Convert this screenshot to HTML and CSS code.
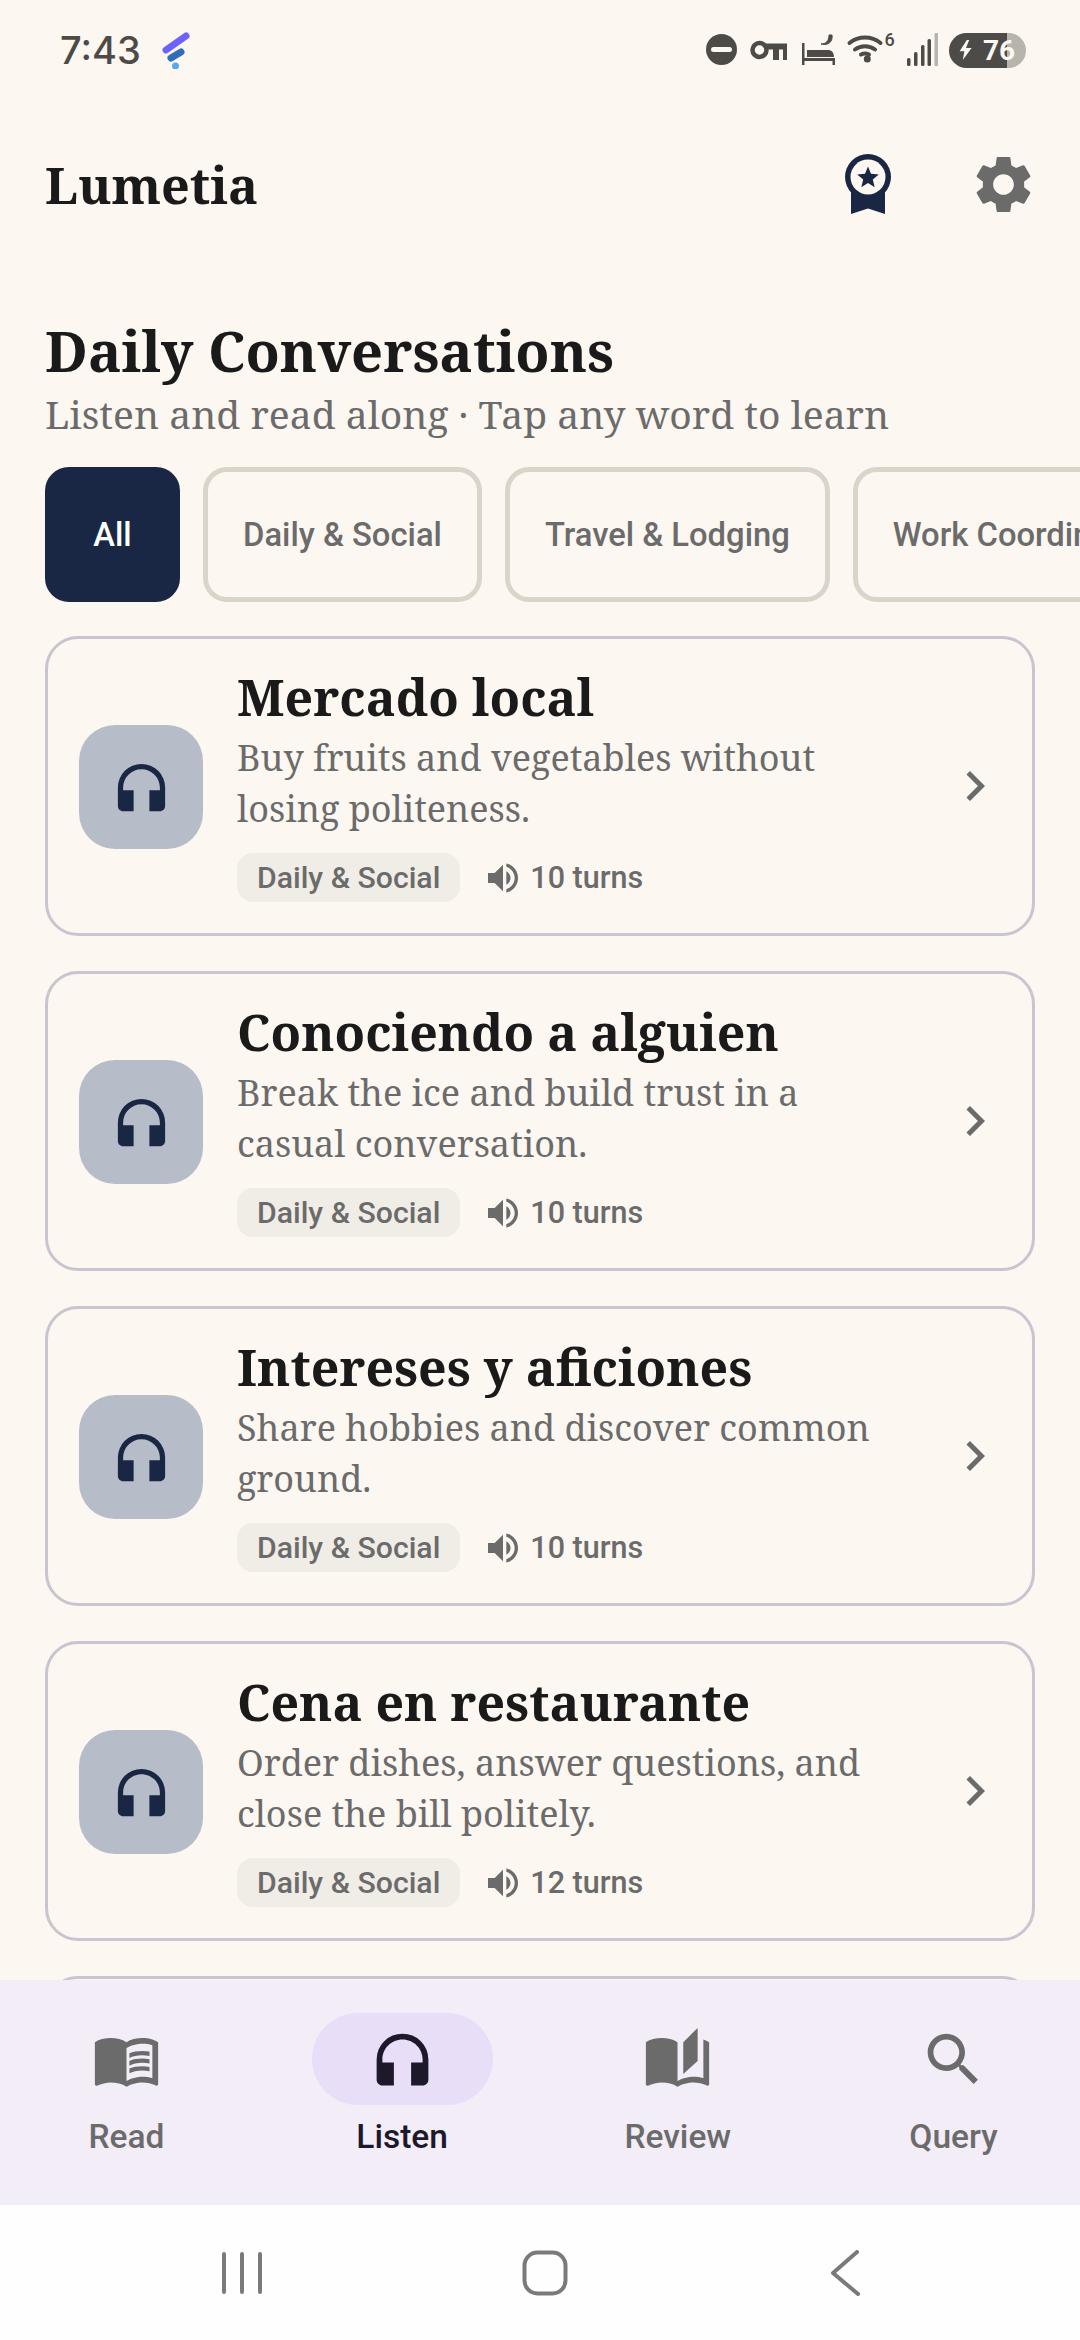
FILE: index.html
```html
<!DOCTYPE html>
<html lang="en">
<head>
<meta charset="utf-8">
<title>Lumetia</title>
<link rel="stylesheet" href="styles.css">
</head>
<body>
<div class="app">
  <div class="status">
    <span class="time">7:43</span>
    <svg class="logo" width="28" height="37" viewBox="161 32 28 37"><path d="M165 50 L185 36" stroke="#6C63FF" stroke-width="7" stroke-linecap="round"/><path d="M170 58 L180 52" stroke="#2F6DB8" stroke-width="7" stroke-linecap="round"/><circle cx="174.500" cy="66" r="3.500" fill="#5AA9E6"/></svg>
    <span class="spacer"></span>
    <svg class="sysicons" width="232" height="40" viewBox="706 30 232 40">
      <circle cx="721.500" cy="49.500" r="15.500" fill="#4D4B48"/><rect x="711" y="47" width="21" height="5" rx="2.500" fill="#FCF7F1"/>
      <circle cx="759.500" cy="50" r="7" fill="none" stroke="#4D4B48" stroke-width="4.500"/><path d="M766 43.500h21v6h-21zM773 48h6v12h-6zM783 48h4v12h-4z" fill="#4D4B48"/>
      <path d="M802 43h2.500v22H802zM807 50h21c3.500 0 6 2.500 6 7H807zM802 58h33v7h-2.500v-4H802z" fill="#4D4B48"/><path d="M832 35c1 6-3 11-11 9 5 0 8-3 8-9z" fill="#4D4B48" stroke="#4D4B48"/>
      <path d="M849.500 44a25 25 0 0 1 31 0M855 50.500a17 17 0 0 1 20 0M861 55.500a9 9 0 0 1 8 0" transform="translate(0 -1)" fill="none" stroke="#4D4B48" stroke-width="4" stroke-linecap="round"/><circle cx="867.300" cy="59" r="3.500" fill="#4D4B48"/>
      <text class="wifi6" x="884.500" y="46">6</text>
      <rect x="907" y="58" width="3.500" height="8" rx="1.500" fill="#4D4B48"/><rect x="914" y="52" width="3.500" height="14" rx="1.500" fill="#4D4B48"/><rect x="921" y="45" width="3.500" height="21" rx="1.500" fill="#4D4B48"/><rect x="927.500" y="39" width="3.500" height="27" rx="1.500" fill="#4D4B48"/><rect x="934.500" y="33" width="3.500" height="33" rx="1" fill="#B7B4AD"/>
    </svg>
    <div class="battery">
      <svg width="16" height="20" viewBox="0 0 18 25"><path d="M10 0 1 14h6l-2 11 11-15h-7l4-10z" fill="#FCF7F1"/></svg>
      <span>76</span>
    </div>
  </div>

  <header class="topbar">
    <h1 class="brand">Lumetia</h1>
    <svg class="badge" width="46" height="60" viewBox="0 0 46 60"><path d="M6 30h34v30l-17-5.500L6 60z" fill="#1A2744"/><circle cx="23" cy="23" r="23" fill="#1A2744"/><circle cx="23" cy="23" r="17.500" fill="#FCF7F1"/><path d="M23 12.500l3 7.300 7.800.6-6 5.100 1.900 7.700L23 29l-6.700 4.200 1.900-7.700-6-5.100 7.800-.6z" fill="#1A2744"/></svg>
    <svg class="gear" width="69" height="69" viewBox="0 0 24 24"><path d="M19.140 12.940c.04-.3.06-.61.06-.94 0-.32-.02-.64-.07-.94l2.030-1.580c.18-.14.23-.41.12-.61l-1.920-3.320c-.12-.22-.37-.29-.59-.22l-2.390.96c-.5-.38-1.030-.7-1.620-.94l-.36-2.540c-.04-.24-.24-.41-.48-.41h-3.840c-.24 0-.43.17-.47.41l-.36 2.540c-.59.24-1.130.57-1.620.94l-2.390-.96c-.22-.08-.47 0-.59.22L2.740 8.870c-.12.21-.08.47.12.61l2.030 1.580c-.05.3-.09.63-.09.94s.02.64.07.94l-2.030 1.580c-.18.14-.23.41-.12.61l1.920 3.320c.12.22.37.29.59.22l2.390-.96c.5.38 1.030.7 1.620.94l.36 2.540c.05.24.24.41.48.41h3.840c.24 0 .44-.17.47-.41l.36-2.540c.59-.24 1.130-.56 1.620-.94l2.390.96c.22.08.47 0 .59-.22l1.920-3.320c.12-.22.07-.47-.12-.61l-2.010-1.580zM12 15.600c-1.980 0-3.600-1.620-3.600-3.600s1.620-3.600 3.600-3.600 3.600 1.620 3.600 3.600-1.620 3.600-3.600 3.600z" fill="#6B6B6B"/></svg>
  </header>

  <main class="content">
    <h2 class="heading">Daily Conversations</h2>
    <p class="subheading">Listen and read along · Tap any word to learn</p>
    <div class="chips">
      <span class="chip chip-active">All</span>
      <span class="chip">Daily &amp; Social</span>
      <span class="chip">Travel &amp; Lodging</span>
      <span class="chip">Work Coordination</span>
    </div>
    <div class="cards">
      <article class="card">
        <div class="thumb"><svg width="63" height="63" viewBox="0 0 24 24"><path d="M12 3a9 9 0 0 0-9 9v7c0 1.100.9 2 2 2h4v-8H5v-1c0-3.870 3.130-7 7-7s7 3.130 7 7v1h-4v8h4c1.100 0 2-.9 2-2v-7a9 9 0 0 0-9-9z" fill="#1A2744"/></svg></div>
        <div class="body">
          <h3 class="title">Mercado local</h3>
          <p class="desc">Buy fruits and vegetables without losing politeness.</p>
          <div class="meta"><span class="tag">Daily &amp; Social</span><svg class="vol" width="40" height="40" viewBox="0 0 24 24"><path d="M3 9v6h4l5 5V4L7 9H3zm13.500 3c0-1.770-1.020-3.290-2.500-4.030v8.050c1.480-.73 2.500-2.250 2.500-4.020zM14 3.230v2.060c2.890.86 5 3.540 5 6.710s-2.110 5.850-5 6.710v2.060c4.010-.91 7-4.490 7-8.770s-2.990-7.860-7-8.770z" fill="#6B6B6B"/></svg><span class="turns">10 turns</span></div>
        </div>
        <svg class="chev" width="60" height="60" viewBox="0 0 24 24"><path d="M10 6 8.590 7.410 13.170 12l-4.580 4.590L10 18l6-6z" fill="#6B6B6B"/></svg>
      </article>
      <article class="card">
        <div class="thumb"><svg width="63" height="63" viewBox="0 0 24 24"><path d="M12 3a9 9 0 0 0-9 9v7c0 1.100.9 2 2 2h4v-8H5v-1c0-3.870 3.130-7 7-7s7 3.130 7 7v1h-4v8h4c1.100 0 2-.9 2-2v-7a9 9 0 0 0-9-9z" fill="#1A2744"/></svg></div>
        <div class="body">
          <h3 class="title">Conociendo a alguien</h3>
          <p class="desc">Break the ice and build trust in a casual conversation.</p>
          <div class="meta"><span class="tag">Daily &amp; Social</span><svg class="vol" width="40" height="40" viewBox="0 0 24 24"><path d="M3 9v6h4l5 5V4L7 9H3zm13.500 3c0-1.770-1.020-3.290-2.500-4.030v8.050c1.480-.73 2.500-2.250 2.500-4.020zM14 3.230v2.060c2.890.86 5 3.540 5 6.710s-2.110 5.850-5 6.710v2.060c4.010-.91 7-4.490 7-8.770s-2.990-7.860-7-8.770z" fill="#6B6B6B"/></svg><span class="turns">10 turns</span></div>
        </div>
        <svg class="chev" width="60" height="60" viewBox="0 0 24 24"><path d="M10 6 8.590 7.410 13.170 12l-4.580 4.590L10 18l6-6z" fill="#6B6B6B"/></svg>
      </article>
      <article class="card">
        <div class="thumb"><svg width="63" height="63" viewBox="0 0 24 24"><path d="M12 3a9 9 0 0 0-9 9v7c0 1.100.9 2 2 2h4v-8H5v-1c0-3.870 3.130-7 7-7s7 3.130 7 7v1h-4v8h4c1.100 0 2-.9 2-2v-7a9 9 0 0 0-9-9z" fill="#1A2744"/></svg></div>
        <div class="body">
          <h3 class="title">Intereses y aficiones</h3>
          <p class="desc">Share hobbies and discover common ground.</p>
          <div class="meta"><span class="tag">Daily &amp; Social</span><svg class="vol" width="40" height="40" viewBox="0 0 24 24"><path d="M3 9v6h4l5 5V4L7 9H3zm13.500 3c0-1.770-1.020-3.290-2.500-4.030v8.050c1.480-.73 2.500-2.250 2.500-4.020zM14 3.230v2.060c2.890.86 5 3.540 5 6.710s-2.110 5.850-5 6.710v2.060c4.010-.91 7-4.490 7-8.770s-2.990-7.860-7-8.770z" fill="#6B6B6B"/></svg><span class="turns">10 turns</span></div>
        </div>
        <svg class="chev" width="60" height="60" viewBox="0 0 24 24"><path d="M10 6 8.590 7.410 13.170 12l-4.580 4.590L10 18l6-6z" fill="#6B6B6B"/></svg>
      </article>
      <article class="card">
        <div class="thumb"><svg width="63" height="63" viewBox="0 0 24 24"><path d="M12 3a9 9 0 0 0-9 9v7c0 1.100.9 2 2 2h4v-8H5v-1c0-3.870 3.130-7 7-7s7 3.130 7 7v1h-4v8h4c1.100 0 2-.9 2-2v-7a9 9 0 0 0-9-9z" fill="#1A2744"/></svg></div>
        <div class="body">
          <h3 class="title">Cena en restaurante</h3>
          <p class="desc">Order dishes, answer questions, and close the bill politely.</p>
          <div class="meta"><span class="tag">Daily &amp; Social</span><svg class="vol" width="40" height="40" viewBox="0 0 24 24"><path d="M3 9v6h4l5 5V4L7 9H3zm13.500 3c0-1.770-1.020-3.290-2.500-4.030v8.050c1.480-.73 2.500-2.250 2.500-4.020zM14 3.230v2.060c2.890.86 5 3.540 5 6.710s-2.110 5.850-5 6.710v2.060c4.010-.91 7-4.490 7-8.770s-2.990-7.860-7-8.770z" fill="#6B6B6B"/></svg><span class="turns">12 turns</span></div>
        </div>
        <svg class="chev" width="60" height="60" viewBox="0 0 24 24"><path d="M10 6 8.590 7.410 13.170 12l-4.580 4.590L10 18l6-6z" fill="#6B6B6B"/></svg>
      </article>
      <article class="card"></article>
    </div>
  </main>

  <nav class="tabs">
    <div class="tab">
      <div class="tab-icon"><svg width="69" height="69" viewBox="0 0 24 24"><path d="M21 5c-1.110-.35-2.330-.5-3.500-.5-1.950 0-4.050.4-5.500 1.500-1.450-1.100-3.550-1.500-5.500-1.500S2.450 4.900 1 6v14.650c0 .25.25.5.5.5.1 0 .15-.05.25-.05C3.100 20.450 5.050 20 6.500 20c1.950 0 4.050.4 5.500 1.500 1.350-.85 3.800-1.500 5.500-1.500 1.650 0 3.350.3 4.750 1.050.1.05.15.05.25.05.25 0 .5-.25.5-.5V6c-.6-.45-1.250-.75-2-1zm0 13.500c-1.100-.35-2.300-.5-3.500-.5-1.700 0-4.150.65-5.500 1.500V8c1.350-.85 3.800-1.500 5.500-1.500 1.200 0 2.400.15 3.500.5v11.500z" fill="#6B6B6B"/><path d="M17.500 10.500c.88 0 1.730.09 2.500.26V9.240c-.79-.15-1.640-.24-2.500-.24-1.700 0-3.240.29-4.500.83v1.660c1.130-.64 2.700-.99 4.500-.99zM13 12.490v1.660c1.130-.64 2.700-.99 4.500-.99.88 0 1.730.09 2.500.26V11.900c-.79-.15-1.640-.24-2.500-.24-1.700 0-3.240.3-4.500.83zM17.500 14.330c-1.700 0-3.240.29-4.500.83v1.660c1.130-.64 2.700-.99 4.500-.99.88 0 1.730.09 2.500.26v-1.520c-.79-.16-1.640-.24-2.500-.24z" fill="#6B6B6B"/></svg></div>
      <span class="tab-label">Read</span>
    </div>
    <div class="tab tab-active">
      <div class="tab-icon"><svg width="69" height="69" viewBox="0 0 24 24"><path d="M12 3a9 9 0 0 0-9 9v7c0 1.100.9 2 2 2h4v-8H5v-1c0-3.870 3.130-7 7-7s7 3.130 7 7v1h-4v8h4c1.100 0 2-.9 2-2v-7a9 9 0 0 0-9-9z" fill="#1D192B"/></svg></div>
      <span class="tab-label">Listen</span>
    </div>
    <div class="tab">
      <div class="tab-icon"><svg width="69" height="69" viewBox="0 0 24 24"><path d="M19 1l-5 5v11l5-4.500V1zM1 6v14.650c0 .25.25.5.5.5.1 0 .15-.05.25-.05C3.100 20.450 5.050 20 6.500 20c1.950 0 4.050.4 5.500 1.500 1.350-.85 3.800-1.500 5.500-1.500 1.650 0 3.350.3 4.750 1.050.1.05.15.05.25.05.25 0 .5-.25.5-.5V6c-.6-.45-1.250-.75-2-1v13.500c-1.100-.35-2.300-.5-3.500-.5-1.700 0-4.150.65-5.500 1.500V6c-1.450-1.100-3.550-1.500-5.500-1.500S2.450 4.900 1 6z" fill="#6B6B6B"/></svg></div>
      <span class="tab-label">Review</span>
    </div>
    <div class="tab">
      <div class="tab-icon"><svg width="69" height="69" viewBox="0 0 24 24"><path d="M15.500 14h-.79l-.28-.27C15.410 12.590 16 11.110 16 9.500 16 5.910 13.090 3 9.500 3S3 5.910 3 9.500 5.910 16 9.500 16c1.610 0 3.090-.59 4.230-1.570l.27.28v.79l5 4.990L20.490 19l-4.990-5zm-6 0C7.010 14 5 11.990 5 9.500S7.010 5 9.500 5 14 7.010 14 9.500 11.990 14 9.500 14z" fill="#6B6B6B"/></svg></div>
      <span class="tab-label">Query</span>
    </div>
  </nav>

  <div class="sysnav">
    <svg width="40" height="42" viewBox="0 0 40 42"><path d="M2 2v38M20 2v38M38 2v38" stroke="#7A7A7A" stroke-width="4" stroke-linecap="round"/></svg>
    <svg class="sys-home" width="46" height="46" viewBox="0 0 46 46"><rect x="2.500" y="2.500" width="41" height="41" rx="13" fill="none" stroke="#7A7A7A" stroke-width="4"/></svg>
    <svg class="sys-back" width="30" height="46" viewBox="0 0 30 46"><path d="M27 2 3 23l25 21" fill="none" stroke="#7A7A7A" stroke-width="4" stroke-linecap="round" stroke-linejoin="round"/></svg>
  </div>
</div>
</body>
</html>
```

FILE: styles.css
```css
* { box-sizing: border-box; margin: 0; padding: 0; }
html, body { background: #FCF7F1; }
body { width: 1080px; height: 2340px; overflow: hidden; font-family: Roboto, sans-serif; }
.app { width: 1080px; height: 2340px; display: flex; flex-direction: column; overflow: hidden; }

.status { height: 100px; flex: none; display: flex; align-items: center; padding: 0 54px 0 60px; color: #4D4B48; }
.time { font-family: Inter, Roboto, sans-serif; font-size: 38px; font-weight: 500; color: #4D4B48; }
.logo { margin-left: 21px; }
.spacer { flex: 1; }
.wifi6 { font-family: Roboto, sans-serif; font-size: 18px; font-weight: 500; fill: #4D4B48; }
.battery { width: 77px; height: 35px; margin-left: 11px; border-radius: 18px; display: flex; align-items: center; gap: 9px; padding-left: 9px; background: linear-gradient(90deg, #4D4B48 0, #4D4B48 58px, #B7B4AD 58px); color: #FCF7F1; font-size: 28px; font-weight: 700; }

.topbar { height: 168px; flex: none; display: flex; align-items: center; padding: 0 42px 0 45px; }
.brand { font-family: "Noto Serif", "DejaVu Serif", serif; font-size: 50.300px; font-weight: 700; color: #1A1A1A; flex: 1; }
.badge { margin-right: 78px; }

.content { flex: 1; min-height: 0; overflow: hidden; padding-left: 45px; }
.heading { font-family: "Noto Serif", "DejaVu Serif", serif; font-size: 56px; line-height: 70px; font-weight: 700; color: #1A1A1A; margin-top: 47px; }
.subheading { font-family: "Noto Serif", "DejaVu Serif", serif; font-size: 39px; line-height: 56px; margin-top: 1px; color: #6B6B6B; }
.chips { display: flex; gap: 23px; margin-top: 25px; width: 1035px; overflow: hidden; }
.chip { flex: none; height: 135px; min-width: 135px; padding: 0 35px; border: 5px solid #DBD4C8; border-radius: 24px; display: flex; align-items: center; justify-content: center; font-size: 32.750px; font-weight: 500; color: #6B6B6B; }
.chip-active { background: #1A2744; border-color: #1A2744; color: #FFFFFF; }

.cards { display: flex; flex-direction: column; gap: 35px; margin-top: 34px; width: 990px; }
.card { flex: none; height: 300px; border: 3px solid #CAC4D0; border-radius: 33px; display: flex; align-items: center; padding: 0 27px 0 31px; gap: 34px; }
.thumb { flex: none; width: 124px; height: 124px; margin-top: 2px; border-radius: 36px; background: #B6BDC9; display: flex; align-items: center; justify-content: center; }
.body { flex: 1; min-width: 0; padding: 0 13px 4px 0; }
.title { font-family: "Noto Serif", "DejaVu Serif", serif; font-size: 50px; line-height: 62px; font-weight: 700; color: #1A1A1A; }
.desc { font-family: "Noto Serif", "DejaVu Serif", serif; font-size: 36px; line-height: 51px; margin-top: 4px; color: #6B6B6B; }
.meta { display: flex; align-items: center; margin-top: 19px; }
.tag { height: 49px; padding: 0 20px; border-radius: 16px; background: #F0EDE6; display: flex; align-items: center; font-size: 30.200px; font-weight: 500; color: #6B6B6B; }
.vol { margin-left: 23px; margin-right: 7px; }
.turns { font-size: 30.500px; font-weight: 500; color: #6B6B6B; }
.chev { flex: none; }

.tabs { height: 225px; flex: none; background: #F3EDF7; display: flex; justify-content: space-between; padding: 33px 36px 0 36px; }
.tab { width: 181px; display: flex; flex-direction: column; align-items: center; }
.tab-icon { width: 181px; height: 92px; border-radius: 46px; display: flex; align-items: center; justify-content: center; }
.tab-active .tab-icon { background: #E8DEF8; }
.tab-label { margin-top: 9px; font-size: 33.500px; line-height: 46px; font-weight: 500; color: #6B6B6B; }
.tab-active .tab-label { color: #1D192B; }

.sysnav { height: 135px; flex: none; background: #FEFEFE; display: flex; align-items: center; padding-left: 222px; }
.sys-home { margin-left: 260px; }
.sys-back { margin-left: 262px; }
```
